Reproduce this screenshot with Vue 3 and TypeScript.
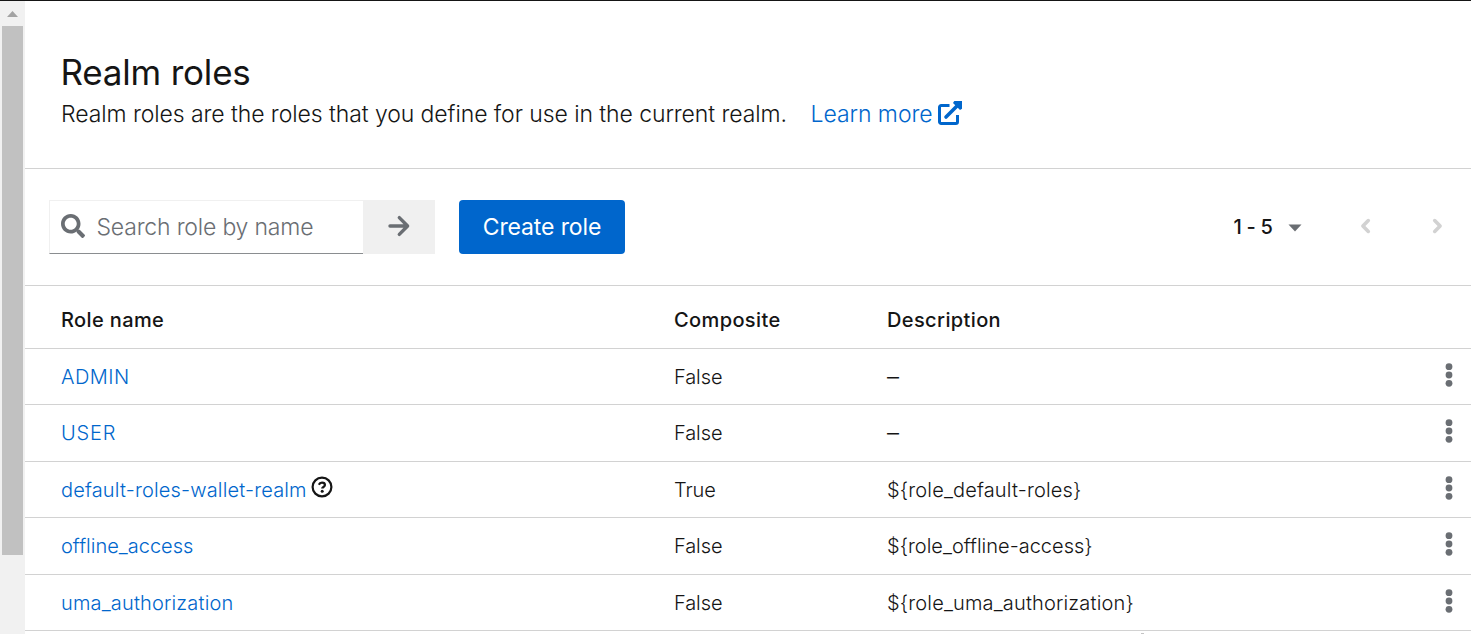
<script setup lang="ts">
interface Role {
  name: string
  composite: boolean
  description: string
  tracking?: 'wide' | 'wider' | 'tight'
  isDefault?: boolean
}

const roles: Role[] = [
  { name: 'ADMIN', composite: false, description: '–', tracking: 'wide' },
  { name: 'USER', composite: false, description: '–', tracking: 'wider' },
  { name: 'default-roles-wallet-realm', composite: true, description: '${role_default-roles}', isDefault: true },
  { name: 'offline_access', composite: false, description: '${role_offline-access}', tracking: 'tight' },
  { name: 'uma_authorization', composite: false, description: '${role_uma_authorization}' },
]
</script>

<template>
  <div class="page">
    <aside class="scrollbar">
      <svg class="scroll-up" width="11" height="6" viewBox="0 0 11 6"><path d="M0 6 5.500 0 11 6z" fill="#a3a3a3" /></svg>
      <div class="thumb"></div>
    </aside>
    <main class="content">
      <header class="intro">
        <h1>Realm roles</h1>
        <p>
          <span class="lead">Realm roles are the roles that you define for use in the current realm.</span>
          <a class="learn">
            <span>Learn more</span>
            <svg width="24" height="24" viewBox="0 0 24 24" fill="none" stroke="#06c">
              <path d="M11.500 4.500H3.200A1.700 1.700 0 0 0 1.500 6.200v14.600a1.700 1.700 0 0 0 1.700 1.700h14.600a1.700 1.700 0 0 0 1.700-1.700V14" stroke-width="3" />
              <path d="M8 16 20 4" stroke-width="3.600" stroke-linecap="round" />
              <path d="M16.300 0H24v7.700L22 9 15 2z" fill="#06c" stroke="none" />
            </svg>
          </a>
        </p>
      </header>

      <section class="toolbar">
        <div class="search">
          <svg width="24" height="24" viewBox="0 0 512 512" fill="#6a6e73">
            <path d="M505 442.700L405.300 343c-4.500-4.500-10.600-7-17-7H372c27.600-35.300 44-79.700 44-128C416 93.100 322.900 0 208 0S0 93.100 0 208s93.100 208 208 208c48.300 0 92.700-16.400 128-44v16.300c0 6.400 2.500 12.500 7 17l99.700 99.700c9.400 9.400 24.600 9.400 33.900 0l28.300-28.300c9.400-9.400 9.400-24.600.1-34zM208 336c-70.700 0-128-57.200-128-128 0-70.700 57.200-128 128-128 70.700 0 128 57.200 128 128 0 70.700-57.200 128-128 128z" />
          </svg>
          <span>Search role by name</span>
        </div>
        <button class="go" aria-label="Search">
          <svg width="22" height="22" viewBox="0 0 22 22" fill="none" stroke="#6a6e73" stroke-width="3.400" stroke-linecap="round" stroke-linejoin="round">
            <path d="M2 11h17M11.300 2.600 19.600 11l-8.300 8.400" />
          </svg>
        </button>
        <button class="create">Create role</button>
        <div class="pager">
          <span class="range">1 - 5</span>
          <svg class="caret" width="14" height="8" viewBox="0 0 14 8"><path d="M.5.500h13L7 7.500z" fill="#6a6e73" /></svg>
          <svg class="prev" width="11" height="16" viewBox="0 0 11 16"><path d="M8.300 2.600 2.900 8l5.400 5.400" /></svg>
          <svg class="next" width="11" height="16" viewBox="0 0 11 16"><path d="M2.700 2.600 8.100 8l-5.400 5.400" /></svg>
        </div>
      </section>

      <section class="table">
        <div class="row head">
          <span>Role name</span>
          <span>Composite</span>
          <span>Description</span>
        </div>
        <div v-for="role in roles" :key="role.name" class="row">
          <div class="name">
            <a :class="role.tracking">{{ role.name }}</a>
            <svg v-if="role.isDefault" class="help" width="22" height="22" viewBox="0 0 22 22" fill="none" stroke="#151515">
              <circle cx="11" cy="11" r="9.400" stroke-width="2.200" />
              <path d="M7.900 8.700C8.500 7.300 9.600 6.700 11 6.700c1.700 0 2.900.9 2.900 2.300 0 2-2.700 1.900-2.700 3.600" stroke-width="2.300" />
              <circle cx="11.200" cy="15.200" r="1.500" fill="#151515" stroke="none" />
            </svg>
          </div>
          <span class="composite">{{ role.composite ? 'True' : 'False' }}</span>
          <span :class="[role.tracking, { dash: role.description === '–' }]">{{ role.description }}</span>
          <svg class="kebab" width="8" height="24" viewBox="0 0 8 24" fill="#6a6e73">
            <circle cx="4" cy="3.700" r="3.400" />
            <circle cx="4" cy="12" r="3.400" />
            <circle cx="4" cy="20.300" r="3.400" />
          </svg>
        </div>
      </section>
      <div class="overflow-mark"></div>
    </main>
  </div>
</template>

<style>
body { margin: 0; overflow: hidden; }
</style>

<style scoped>
* { box-sizing: border-box; }
svg { display: block; flex: none; }
.page {
  display: flex;
  height: 634px;
  overflow: hidden;
  border-top: 1px solid #151515;
  background: #fff;
  color: #151515;
  font-family: Inter, "Liberation Sans", sans-serif;
  font-weight: 300;
}
.scrollbar { width: 25px; flex: none; background: #f1f1f1; padding: 10px 2px 0; }
.scroll-up { margin: 0 0 9px 5px; }
.thumb { width: 21px; height: 529px; background: #c1c1c1; }
.content { flex: 1; min-width: 0; }
.intro { height: 168px; padding: 48px 0 0 36px; border-bottom: 1px solid #d2d2d2; }
h1 { margin: 0 0 1px -0.5px; font-size: 35px; line-height: 46px; font-weight: 400; letter-spacing: -0.2px; }
p { display: flex; margin: 0; font-size: 23px; line-height: 36px; white-space: nowrap; }
.lead { width: 749.5px; letter-spacing: -0.08px; }
a { color: #06c; }
.learn { display: flex; gap: 5px; }
.learn span { width: 122.5px; letter-spacing: -0.05px; }
.learn svg { margin-top: 5px; }
.toolbar { display: flex; align-items: center; height: 117px; padding-left: 24px; border-bottom: 1px solid #d2d2d2; }
.search {
  display: flex;
  align-items: center;
  gap: 11.5px;
  width: 314px;
  height: 54px;
  padding-left: 11px;
  border: 1px solid #f0f0f0;
  border-right: 0;
  border-bottom-color: #8a8d90;
  color: #6a6e73;
  font-size: 23px;
  letter-spacing: -0.19px;
}
.search svg { margin-top: -2px; }
button { border: 0; padding: 0; font: inherit; height: 54px; }
.go { display: flex; align-items: center; justify-content: center; width: 72px; background: #f0f0f0; }
.go svg { margin-top: -2px; }
.create { width: 166px; margin-left: 24px; border-radius: 4px; background: #06c; color: #fff; font-size: 23px; font-weight: 400; letter-spacing: -0.12px; }
.pager { display: flex; align-items: center; margin-left: auto; padding-right: 28.5px; }
.range { font-size: 20px; font-weight: 500; letter-spacing: -0.3px; }
.caret { margin: 1px 58px 0 15px; }
.prev, .next { margin-top: -2px; fill: none; stroke: #d2d2d2; stroke-width: 3.6; stroke-linecap: round; stroke-linejoin: round; }
.next { margin-left: 61px; }
.row {
  display: grid;
  grid-template-columns: 613px 213px 1fr 8px;
  align-items: center;
  height: 56px;
  padding: 0 18px 0 36px;
  border-bottom: 1px solid #d2d2d2;
  font-size: 20px;
  letter-spacing: 0.16px;
  white-space: nowrap;
}
.row:nth-child(odd) { height: 57px; }
.row.head { height: 63px; padding-top: 6px; font-weight: 500; letter-spacing: 0.38px; }
.row .wide { letter-spacing: 0.5px; }
.row .wider { letter-spacing: 0.8px; }
.row .tight { letter-spacing: 0; }
.row .composite { letter-spacing: -0.1px; }
.row .dash { font-size: 24px; line-height: 24px; }
.name { display: flex; align-items: center; }
.help { margin: -6px 0 0 4px; }
.kebab { align-self: start; margin-top: 14px; }
.overflow-mark { width: 3px; height: 1px; margin: 2px 0 0 1116px; background: #c4c4c4; }
</style>
